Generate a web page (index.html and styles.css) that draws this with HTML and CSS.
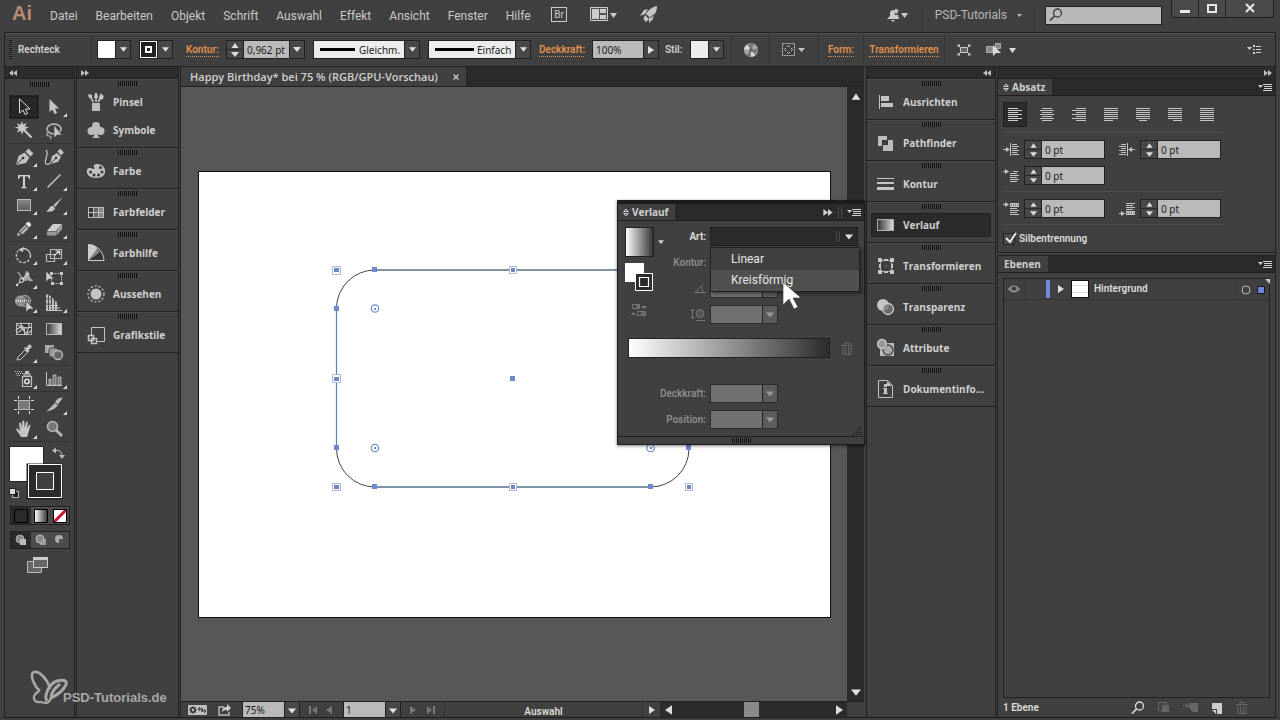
FILE: index.html
```html
<!DOCTYPE html>
<html lang="de">
<head>
<meta charset="utf-8">
<title>Happy Birthday – Illustrator</title>
<link rel="stylesheet" href="styles.css">
</head>
<body>
<svg class="defs" aria-hidden="true">
<defs>
<linearGradient id="gLight"><stop offset="0" stop-color="#fff"/><stop offset="1" stop-color="#333"/></linearGradient>
<linearGradient id="gDark"><stop offset="0" stop-color="#333"/><stop offset="1" stop-color="#ddd"/></linearGradient>
<linearGradient id="gGrey" x2="0" y2="1"><stop offset="0" stop-color="#888"/><stop offset="1" stop-color="#5c5c5c"/></linearGradient>
</defs>
<symbol id="up" viewBox="0 0 8 5"><path fill="currentColor" d="M4 0l3.500 5h-7z"/></symbol>
<symbol id="down" viewBox="0 0 8 5"><path fill="currentColor" d="M0 0h8l-4 5z"/></symbol>
<symbol id="right" viewBox="0 0 6 8"><path fill="currentColor" d="M0 0v8l6-4z"/></symbol>
<symbol id="left" viewBox="0 0 6 8"><path fill="currentColor" d="M6 0v8l-6-4z"/></symbol>
<symbol id="ff" viewBox="0 0 8 6"><path fill="currentColor" d="M0 0v6l4-3zM4 0v6l4-3z"/></symbol>
<symbol id="rw" viewBox="0 0 8 6"><path fill="currentColor" d="M4 0v6l-4-3zM8 0v6l-4-3z"/></symbol>
<symbol id="menu" viewBox="0 0 14 9"><path fill="currentColor" d="M0 2h5l-2.500 3zM5 1h9v1h-9zM6 3h8v1h-8zM6 5h8v1h-8zM5 7h9v1h-9z"/></symbol>
<symbol id="opts" viewBox="0 0 14 9"><path fill="currentColor" d="M0 2h5l-2.500 3zM6 0h2v2h-2zM6 4h2v1h-2zM6 7h2v2h-2zM9 1h5v1h-5zM9 4h5v1h-5zM9 7h5v1h-5z"/></symbol>
<symbol id="updown" viewBox="0 0 6 9"><path fill="none" stroke="currentColor" d="M.7 3.500l2.300-2.500 2.300 2.500zM.7 5.500l2.300 2.500 2.300-2.500z"/></symbol>
<symbol id="lens" viewBox="0 0 14 14"><circle cx="8.500" cy="5" r="4" fill="none" stroke="currentColor" stroke-width="1.300"/><path d="M5.500 8l-4.500 4.500" stroke="currentColor" stroke-width="1.700"/></symbol>
<symbol id="trash" viewBox="0 0 12 13"><path fill="none" stroke="currentColor" d="M0 3.500h12M4 3v-2h4v2M2 4.500v8h8v-8M4.500 5v7M7.500 5v7"/></symbol>

<symbol id="t-select" viewBox="0 0 20 20"><path d="M5.500 2v14l3.500-3 2 4.500 2.500-1-2-4.500h4.500z" fill="#252525" stroke="#ddd"/></symbol>
<symbol id="t-direct" viewBox="0 0 20 20"><path d="M5.500 2v13l3-2.500 2 4.500 2.500-1-2-4.500h4z" fill="#c6c6c6"/></symbol>
<symbol id="t-wand" viewBox="0 0 20 20"><path d="M8 0l1.200 3.800 3.400-2-1.600 3.700 4 .8-3.600 1.600 1.800 3.600-3.700-1.800-1.500 4-1.400-4-3.600 1.800 1.600-3.800-4-1.200 4-1-1.800-3.600 3.600 1.800z" fill="#c6c6c6"/><path d="M10 9l7.500 7.500" stroke="#c6c6c6" stroke-width="2.200"/></symbol>
<symbol id="t-lasso" viewBox="0 0 20 20"><ellipse cx="10" cy="8" rx="7" ry="5" fill="none" stroke="#aaa" stroke-width="1.800"/><path d="M5 11c-3 0-3 4 0 4s2 2 1 3" fill="none" stroke="#aaa" stroke-width="1.200"/><path d="M10 4v13l3-3 5 0z" fill="#c6c6c6" stroke="#404040" stroke-width=".6"/></symbol>
<symbol id="t-pen" viewBox="0 0 20 20"><path d="M2 18l2.500-9 6-3.500 5 5-3.500 5.500zM11.500 4.500l3-3 5 5-3 3z" fill="#c0c0c0"/><path d="M2.500 17.500l6-6" stroke="#404040"/><circle cx="9" cy="11" r="1.300" fill="#303030"/></symbol>
<symbol id="t-curve" viewBox="0 0 20 20"><path d="M6 17l2-8 5-3 4 4-3 5zM13.500 4.500l2.500-3 4 4-3 3z" fill="#c0c0c0"/><path d="M6.500 16.500l5-5" stroke="#404040"/><circle cx="12" cy="11" r="1.200" fill="#303030"/><path d="M2 3c4 3-3 12 0 14 1.500 1 3 0 4-1" fill="none" stroke="#c0c0c0" stroke-width="1.300"/></symbol>
<symbol id="t-type" viewBox="0 0 20 20"><path d="M4 4h12v4h-1c-.5-2-1-2.700-4-2.700v10c0 1 .5 1 2 1.200v.8h-6v-.8c1.500-.2 2-.2 2-1.200v-10c-3 0-3.500.7-4 2.700h-1z" fill="#d0d0d0"/></symbol>
<symbol id="t-line" viewBox="0 0 20 20"><path d="M3.500 16.500l13-13" stroke="#d0d0d0" stroke-width="1.300"/></symbol>
<symbol id="t-rect" viewBox="0 0 20 20"><rect x="3.500" y="4.500" width="13" height="11" fill="url(#gGrey)" stroke="#bbb"/></symbol>
<symbol id="t-brush" viewBox="0 0 20 20"><path d="M18.500 2l-9 8 1.800 2zM8.500 10.500l2.500 2.500c-1 4-5 4-9 3.500 3-1 3-5 6.500-6z" fill="#c6c6c6"/></symbol>
<symbol id="t-pencil" viewBox="0 0 20 20"><path d="M3 17l1-4 3 3zM5 12l6-6 3.500 3.500-6 6z" fill="#b0b0b0"/><path d="M11.500 5l2-2c1-1 4.500 2 3.500 3.500l-2 2z" fill="#e0e0e0"/><path d="M6.500 13.500l6-6" stroke="#555"/></symbol>
<symbol id="t-eraser" viewBox="0 0 20 20"><path d="M3 12l6-7h9l-6 7z" fill="#ccc"/><path d="M3 12.500h9v4h-9z" fill="#999"/><path d="M12.500 12.500l5.500-7v4l-5.500 7z" fill="#aaa"/></symbol>
<symbol id="t-rotate" viewBox="0 0 20 20"><path d="M6 4.500a7 7 0 0 1 10 8.500" fill="none" stroke="#c6c6c6" stroke-width="1.400"/><path d="M15 15a7 7 0 0 1-11-9" fill="none" stroke="#c6c6c6" stroke-width="1.400" stroke-dasharray="2.500 1.500"/><path d="M4 5l6-3-1 5z" fill="#c6c6c6"/></symbol>
<symbol id="t-scale" viewBox="0 0 20 20"><path d="M2.500 9.500h8v7h-8zM6.500 4.500h11v9h-11z" fill="none" stroke="#b8b8b8" stroke-width="1.200"/><path d="M10 11l5-5m-3.500 0h4v4" fill="none" stroke="#e0e0e0" stroke-width="1.200"/></symbol>
<symbol id="t-width" viewBox="0 0 20 20"><path d="M3 3c4-1 3 5 6 5s1-6 4-6c3 1 1 7 6 9-1 3-5-1-8 1-4 1-4-5-8-9z" fill="#a4a4a4"/><path d="M3 16l11-11" stroke="#ddd"/><circle cx="7.500" cy="11.500" r="2" fill="#404040" stroke="#eee"/><circle cx="3" cy="16" r="1.200" fill="#ddd"/><circle cx="14" cy="5" r="1.200" fill="#ddd"/></symbol>
<symbol id="t-free" viewBox="0 0 20 20"><rect x="7.500" y="4.500" width="10" height="10" fill="none" stroke="#bbb" stroke-dasharray="2 1"/><path d="M6 3h3v3h-3zM16 3h3v3h-3zM16 13h3v3h-3zM7 13h3v3h-3z" fill="#c6c6c6"/><path d="M2 2v11l3-3h5z" fill="#ccc" stroke="#404040" stroke-width=".6"/></symbol>
<symbol id="t-shape" viewBox="0 0 20 20"><circle cx="6.500" cy="8" r="5" fill="#888" stroke="#aaa"/><circle cx="11" cy="8" r="5.500" fill="#888" fill-opacity=".5" stroke="#aaa"/><path d="M2 8h14" stroke="#eee" stroke-width="1.500" stroke-dasharray="1 1"/><path d="M12 8v11l3-3h5z" fill="#d0d0d0" stroke="#404040" stroke-width=".6"/></symbol>
<symbol id="t-persp" viewBox="0 0 20 20"><path d="M2 1l5 2v14h-5zM8 5l2 1v11h-2zM11 8l2 1v8h-2z" fill="#bbb"/><path d="M7 12.500h7M7 15h9M2 17.500h16" stroke="#c8c8c8"/><path d="M2 6h6M2 11h6M4.500 2v15" stroke="#505050"/></symbol>
<symbol id="t-mesh" viewBox="0 0 20 20"><rect x="2.500" y="4.500" width="15" height="11" fill="#303030" stroke="#bbb"/><path d="M2 12c3-6 7-3 8 0s4 3 8-1M7 4c-2 3 7 4 3 12M14 4c4 5-3 7-1 12M3 6c5 2 8 4 15 2M3 14l6-4" fill="none" stroke="#ccc" stroke-width="1.200"/></symbol>
<symbol id="t-grad" viewBox="0 0 20 20"><rect x="2.500" y="4.500" width="15" height="11" fill="url(#gDark)" stroke="#bbb"/></symbol>
<symbol id="t-drop" viewBox="0 0 20 20"><path d="M3 17l1-3 7-7 2.500 2.500-7 7z" fill="none" stroke="#c6c6c6"/><path d="M10 5l1.500-1 1 1 2-3c1-1.500 4 .5 3 2.500l-3 2.500 1 1-1.500 1.500z" fill="#c6c6c6"/></symbol>
<symbol id="t-blend" viewBox="0 0 20 20"><rect x="1" y="2" width="9" height="8" fill="#aaa"/><rect x="5" y="5" width="9" height="9" rx="2" fill="#999" stroke="#404040"/><circle cx="14" cy="12" r="4.500" fill="#666" stroke="#bbb" stroke-width="1.300"/></symbol>
<symbol id="t-spray" viewBox="0 0 20 20"><path d="M8.500 7.500h9v10h-9zM10 5h6v2h-6z" fill="none" stroke="#c0c0c0" stroke-width="1.200"/><rect x="11" y="2" width="4" height="3" fill="#c0c0c0"/><circle cx="13" cy="12.500" r="2.200" fill="none" stroke="#ddd" stroke-width="1.600"/><path d="M1 2.500h8M2 4.500h7M3 6.500h4" stroke="#ccc" stroke-dasharray="1 1"/></symbol>
<symbol id="t-graph" viewBox="0 0 20 20"><path d="M2.500 3v13.500h15.500" fill="none" stroke="#c6c6c6"/><path d="M5 10h2v6h-2zM9 6h3v10h-3zM14 8h3v8h-3z" fill="#777" stroke="#c6c6c6" stroke-width=".8"/></symbol>
<symbol id="t-board" viewBox="0 0 20 20"><rect x="4.500" y="5.500" width="11" height="9" fill="#777" stroke="#bbb"/><path d="M0 5.500h3M17 5.500h3M0 14.500h3M17 14.500h3M4.500 1v3M15.500 1v3M4.500 16v3M15.500 16v3" stroke="#ddd"/></symbol>
<symbol id="t-slice" viewBox="0 0 20 20"><path d="M2 17l9-9 3 2.500-4 3.500zM11 7l3-3.500 5-1-5 7z" fill="#bbb"/></symbol>
<symbol id="t-hand" viewBox="0 0 20 20"><path d="M7 18c-1-3-4-5-5-8 1-1.500 2.500.5 4 2l-1-8c1-1 1.800-.5 2 0l1 5 .3-7c1-1 1.700-.5 2 0l.3 7 1.400-6c1-1 1.700-.5 1.800.3l-.8 6.200 2-3.500c1-.6 1.700 0 1.300 1-1 3-2 8-3.300 11z" fill="#c6c6c6"/></symbol>
<symbol id="t-zoom" viewBox="0 0 20 20"><circle cx="8.500" cy="7.500" r="5" fill="#777" stroke="#b5b5b5" stroke-width="1.600"/><path d="M12 11l6 6" stroke="#b5b5b5" stroke-width="2.800"/></symbol>

<symbol id="p-brush" viewBox="0 0 20 20"><path d="M6 11h8v8h-8z" fill="#bbb"/><path d="M7.500 10l-3-5M10 10v-4M12 10l3-5" stroke="#c6c6c6" stroke-width="1.500"/><path d="M2 2l4 1 0 3-3 0zM9 1l2 0 1 5h-4zM13 5l2-4 2 3 1-1-1 4-3 1z" fill="#c6c6c6"/></symbol>
<symbol id="p-club" viewBox="0 0 20 20"><circle cx="10" cy="6" r="4" fill="#bbb"/><circle cx="5.500" cy="11" r="4" fill="#bbb"/><circle cx="14.500" cy="11" r="4" fill="#bbb"/><path d="M9 9h2l1 7 2 2h-8l2-2z" fill="#bbb"/></symbol>
<symbol id="p-palette" viewBox="0 0 20 20"><path d="M1 9c-1 4 2 8 9 8 6 0 10-3 9-8-1-4-4-6-8-6-2 0-4 1-3 3 1 1 1 2-1 2-2-1-5-2-6 1z" fill="#c0c0c0"/><g fill="#3a3a3a"><circle cx="4.500" cy="11" r="1.500"/><circle cx="8" cy="14" r="1.500"/><circle cx="12.500" cy="14" r="1.500"/><circle cx="16" cy="11" r="1.500"/><circle cx="14.500" cy="6.500" r="1.500"/></g></symbol>
<symbol id="p-swatch" viewBox="0 0 20 20"><rect x="2" y="5" width="16" height="11" fill="#bbb"/><path d="M3 6h4v4h-4zM3 11h4v4h-4z" fill="#333"/><path d="M8 6h4v4h-4zM8 11h4v4h-4z" fill="#666"/><path d="M13 6h4v4h-4zM13 11h4v4h-4z" fill="#888"/></symbol>
<symbol id="p-guide" viewBox="0 0 20 20"><path d="M2.500 1.500c8 0 15 7 15.500 16h-15.500z" fill="#333" stroke="#ccc"/><path d="M2.500 1.500c4 0 7 1.500 9 4l-9 12z" fill="#ccc"/><path d="M11 5.500l3 3.500-11.500 8.500z" fill="#888"/></symbol>
<symbol id="p-look" viewBox="0 0 20 20"><circle cx="10" cy="10" r="5.500" fill="#c4c4c4"/><circle cx="10" cy="10" r="8" fill="none" stroke="#c4c4c4" stroke-width="1.200" stroke-dasharray="2.200 1.800"/></symbol>
<symbol id="p-styles" viewBox="0 0 20 20"><path d="M5.500 10v-7.500h13v14h-7" fill="none" stroke="#c4c4c4"/><path d="M2.500 10.500h5v5h-5zM5.500 13.500h5v5h-5z" fill="#404040" stroke="#c4c4c4" stroke-width="1.500"/></symbol>
<symbol id="p-align" viewBox="0 0 20 20"><path d="M3 3h1v14h-1zM5 4h8v5h-8zM5 11h12v4h-12z" fill="#c4c4c4"/></symbol>
<symbol id="p-path" viewBox="0 0 20 20"><path d="M2 3h9v4h6v11h-10v-5h-5zM7 8v4h4v-4z" fill="#bdbdbd" fill-rule="evenodd"/><path d="M6.500 13v-5.500h5v4.500" fill="none" stroke="#303030"/></symbol>
<symbol id="p-stroke" viewBox="0 0 20 20"><path d="M1 4h17v1h-17zM1 8h17v2h-17zM1 13h17v3h-17z" fill="#c4c4c4"/></symbol>
<symbol id="p-grad" viewBox="0 0 20 20"><rect x="1.500" y="4.500" width="16" height="11" fill="url(#gDark)" stroke="#aaa"/></symbol>
<symbol id="p-trans" viewBox="0 0 20 20"><rect x="4.500" y="4.500" width="11" height="11" fill="none" stroke="#aaa"/><path d="M2 2h4v4h-4zM14 2h4v4h-4zM2 14h4v4h-4zM14 14h4v4h-4zM8 3h4v2h-4zM8 15h4v2h-4zM3 8h2v4h-2zM15 8h2v4h-2zM9.500 9.500h1v1h-1z" fill="#c6c6c6"/></symbol>
<symbol id="p-transp" viewBox="0 0 20 20"><circle cx="7" cy="8" r="6" fill="#c4c4c4"/><circle cx="12" cy="12" r="5.500" fill="#777" fill-opacity=".8" stroke="#ccc" stroke-width="1.300"/></symbol>
<symbol id="p-attr" viewBox="0 0 20 20"><path d="M4 5h14v13h-14z" fill="#bbb"/><circle cx="12" cy="12" r="5" fill="#aaa" stroke="#444" stroke-width="1.300"/><circle cx="6" cy="6" r="4.500" fill="#999" stroke="#404040" stroke-width="2"/><circle cx="6" cy="6" r="4.500" fill="#999" stroke="#ccc" stroke-width="1.300"/></symbol>
<symbol id="p-doc" viewBox="0 0 20 20"><path d="M2.500 1.500h9l5 5v12h-14z" fill="none" stroke="#c4c4c4"/><path d="M11 2v5h5M8 5h3v3h-3zM7 9h4v5h1v1h-5v-1h1v-4h-1z" fill="#c4c4c4"/></symbol>

<symbol id="a-left" viewBox="0 0 16 16"><path d="M1 1.500h10M1 3.500h14M1 5.500h10M1 7.500h14M1 9.500h10M1 11.500h14M1 13.500h10" stroke="#d0d0d0"/></symbol>
<symbol id="a-center" viewBox="0 0 16 16"><path d="M3 1.500h10M1 3.500h14M3 5.500h10M1 7.500h14M3 9.500h10M1 11.500h14M3 13.500h10" stroke="#c4c4c4"/></symbol>
<symbol id="a-right" viewBox="0 0 16 16"><path d="M5 1.500h10M1 3.500h14M5 5.500h10M1 7.500h14M5 9.500h10M1 11.500h14M5 13.500h10" stroke="#c4c4c4"/></symbol>
<symbol id="a-jl" viewBox="0 0 16 16"><path d="M1 1.500h14M1 3.500h14M1 5.500h14M1 7.500h14M1 9.500h14M1 11.500h14M1 13.500h9" stroke="#c4c4c4"/></symbol>
<symbol id="a-jc" viewBox="0 0 16 16"><path d="M1 1.500h14M1 3.500h14M1 5.500h14M1 7.500h14M1 9.500h14M1 11.500h14M4 13.500h8" stroke="#c4c4c4"/></symbol>
<symbol id="a-jr" viewBox="0 0 16 16"><path d="M1 1.500h14M1 3.500h14M1 5.500h14M1 7.500h14M1 9.500h14M1 11.500h14M6 13.500h9" stroke="#c4c4c4"/></symbol>
<symbol id="a-jf" viewBox="0 0 16 16"><path d="M1 1.500h14M1 3.500h14M1 5.500h14M1 7.500h14M1 9.500h14M1 11.500h14M1 13.500h14" stroke="#c4c4c4"/></symbol>
<symbol id="i-left" viewBox="0 0 16 14"><path d="M0 6.500h5M7.500 0v13M9 1.500h5M9 3.500h7M9 5.500h5M9 7.500h7M9 9.500h5M9 11.500h7" stroke="#c4c4c4"/><path d="M3 4l4 2.500-4 2.500z" fill="#c4c4c4"/></symbol>
<symbol id="i-right" viewBox="0 0 16 14"><path d="M11 6.500h5M8.500 0v13M2 1.500h5M0 3.500h7M2 5.500h5M0 7.500h7M2 9.500h5M0 11.500h7" stroke="#c4c4c4"/><path d="M13 4l-4 2.500 4 2.500z" fill="#c4c4c4"/></symbol>
<symbol id="i-first" viewBox="0 0 16 14"><path d="M0 2.500h4M10 2.500h5M7 4.500h7M7 6.500h9M7 8.500h7M7 10.500h9M7 12.500h7" stroke="#c4c4c4"/><path d="M2 0l4 2.500-4 2.500z" fill="#c4c4c4"/></symbol>
<symbol id="i-before" viewBox="0 0 16 14"><path d="M0 2.500h4M7 6.500h7M7 8.500h9M7 10.500h7M7 12.500h9" stroke="#c4c4c4"/><path d="M2 0l4 2.500-4 2.500zM7 1h9v4h-9z" fill="#c4c4c4"/><path d="M8 3h8" stroke="#444" stroke-dasharray="1 1"/></symbol>
<symbol id="i-after" viewBox="0 0 16 14"><path d="M0 11.500h4M7 1.500h9M7 3.500h7M7 5.500h9M7 7.500h7" stroke="#c4c4c4"/><path d="M2 9l4 2.500-4 2.500zM7 9h9v4h-9z" fill="#c4c4c4"/><path d="M8 11h8" stroke="#444" stroke-dasharray="1 1"/></symbol>
</svg>

<header class="menubar">
  <span class="brand">Ai</span>
  <nav class="menus">
    <button>Datei</button><button>Bearbeiten</button><button>Objekt</button><button>Schrift</button><button>Auswahl</button><button>Effekt</button><button>Ansicht</button><button>Fenster</button><button>Hilfe</button>
  </nav>
  <div class="apptools">
    <button class="bridge">Br</button>
    <button class="arrange" aria-label="Dokumente anordnen"><svg width="27" height="15"><path fill="#505050" stroke="#ccc" d="M.5.500h17v13h-17z"/><path fill="#ccc" d="M2 2h7v10h-7zM10 2h6v4h-6zM10 8h6v4h-6zM20 6h7l-3.500 5z"/></svg></button>
    <button aria-label="GPU-Leistung"><svg width="18" height="18"><path fill="#c4c4c4" d="M17 0c-5 1-9 4-11 8l4 4c4-2 7-6 7-12zM8 3l-4 1-4 6 5-2zM14 8l-1 5-4 4 0-5zM5 9l4 4-3 3-2-2c-1-1 0-3 1-5z"/></svg></button>
  </div>
  <div class="account">
    <button class="bell" aria-label="Benachrichtigungen"><svg width="23" height="15"><path fill="#ccc" d="M0 11l3-3v-3c0-2 2-3 3-3l1 2 1 3h3l1 4zM4 12h4l-2 2zM9 0l1 2 2 .3-1.500 1.500.4 2.200-1.900-1-1.900 1 .4-2.200-1.500-1.500 2-.3zM14 5h7l-3.500 5z"/></svg></button>
    <button class="user">PSD-Tutorials <svg width="5" height="3"><use href="#down"/></svg></button>
    <label class="search"><svg width="14" height="14"><use href="#lens"/></svg><input type="search" aria-label="Suchen"></label>
  </div>
  <div class="winctl">
    <button aria-label="Minimieren"><svg width="12" height="11"><path fill="#e8e8e8" d="M1 7h10v3h-10z"/></svg></button>
    <button aria-label="Maximieren"><svg width="12" height="11"><path fill="none" stroke="#e8e8e8" stroke-width="2" d="M2 2h8v7h-8z"/></svg></button>
    <button class="close" aria-label="Schließen"><svg width="12" height="11"><path stroke="#e8e8e8" stroke-width="2" d="M2 1l8 8M10 1l-8 8"/></svg></button>
  </div>
</header>

<section class="control">
  <i class="vgrip"></i>
  <span class="objtype">Rechteck</span>
  <div class="combo"><button class="sw white" aria-label="Fläche"></button><button class="drop" aria-label="Fläche wählen"><svg width="7" height="5"><use href="#down"/></svg></button></div>
  <div class="combo gap8"><button class="sw ring" aria-label="Konturfarbe"><svg width="17" height="17"><path fill="none" stroke="#fff" d="M.5.500h16v16h-16z"/><path fill="none" stroke="#fff" stroke-width="2" d="M6 6h5v5h-5z"/></svg></button><button class="drop" aria-label="Kontur wählen"><svg width="7" height="5"><use href="#down"/></svg></button></div>
  <a class="lnk w-kontur" href="#">Kontur:</a>
  <div class="combo"><span class="step"><button aria-label="Mehr"><svg width="8" height="5"><use href="#up"/></svg></button><button aria-label="Weniger"><svg width="8" height="5"><use href="#down"/></svg></button></span><input class="w45f" value="0,962 pt" aria-label="Konturstärke"><button class="drop" aria-label="Stärke wählen"><svg width="8" height="5"><use href="#down"/></svg></button></div>
  <div class="combo line gap8"><svg class="stroke" width="35" height="3"><path d="M0 0h35v3h-35z"/></svg><select class="profile" aria-label="Breitenprofil"><option>Gleichm.</option></select><span class="drop"><svg width="7" height="5"><use href="#down"/></svg></span></div>
  <div class="combo line gap8"><svg class="stroke" width="39" height="3"><path d="M0 0h39v3h-39z"/></svg><select class="brushdef" aria-label="Pinseldefinition"><option>Einfach</option></select><span class="drop"><svg width="7" height="5"><use href="#down"/></svg></span></div>
  <a class="lnk w-deck" href="#">Deckkraft:</a>
  <div class="combo"><input class="w50f" value="100%" aria-label="Deckkraft"><button class="drop" aria-label="Deckkraft wählen"><svg width="6" height="8"><use href="#right"/></svg></button></div>
  <span class="stil">Stil:</span>
  <div class="combo"><button class="sw light" aria-label="Stil"></button><button class="drop" aria-label="Stil wählen"><svg width="7" height="5"><use href="#down"/></svg></button></div>
  <button class="cell w38" aria-label="Bildmaterial neu färben"><svg width="16" height="16"><circle cx="8" cy="8" r="7" fill="#a8a8a8"/><path d="M8 8l-3-6.300a7 7 0 0 1 6 0zM8 8l6.800-1.500a7 7 0 0 1-3 5.500zM8 8l0 7a7 7 0 0 1-5-2z" fill="#777"/><path d="M8 8l-7-1a7 7 0 0 1 2.500-4zM8 8l4 5.500a7 7 0 0 1-4 1.500z" fill="#ddd"/><circle cx="8" cy="8" r="2" fill="#666"/></svg></button>
  <button class="cell w49" aria-label="Ausrichten"><svg width="24" height="14"><path fill="none" stroke="#c4c4c4" stroke-dasharray="2 1" d="M.5.500h12v12h-12z"/><path fill="none" stroke="#c4c4c4" d="M5 4l1.500-1.500 1.500 1.500M5 9l1.500 1.500 1.500-1.500M4 5l-1.500 1.500 1.500 1.500M9 5l1.500 1.500-1.500 1.500"/><path fill="#c4c4c4" d="M16 5h7l-3.500 4z"/></svg></button>
  <span class="cell w45"><a class="lnk" href="#">Form:</a></span>
  <span class="cell w81"><a class="lnk" href="#">Transformieren</a></span>
  <button class="cell w38" aria-label="Isolieren"><svg width="16" height="14"><path fill="#666" stroke="#ccc" d="M4.500 4.500h7v5h-7z"/><path stroke="#ccc" d="M1 1l3 2.500M15 1l-3 2.500M1 13l3-2.500M15 13l-3-2.500" fill="none"/><path fill="#ccc" d="M4 1v3h-3zM12 1v3h3zM4 13v-3h-3zM12 13v-3h3z"/></svg></button>
  <button class="plain" aria-label="Ähnliche auswählen"><svg width="32" height="14"><path fill="#888" stroke="#aaa" d="M1.500 3.500h6v6h-6zM10.500.500h5v5h-5z"/><path fill="#ddd" d="M8 2v11l3-3h5zM24 5h7l-3.500 5z"/></svg></button>
  <button class="plain end" aria-label="Menü"><svg width="14" height="9"><use href="#opts"/></svg></button>
</section>

<main class="work">
  <aside class="tools">
    <div class="strip"><svg width="8" height="6"><use href="#rw"/></svg></div>
    <i class="grip"></i>
    <div class="tg"><button class="on" aria-label="Auswahl"><svg><use href="#t-select"/></svg></button><button class="m" aria-label="Direktauswahl"><svg><use href="#t-direct"/></svg></button><button aria-label="Zauberstab"><svg><use href="#t-wand"/></svg></button><button aria-label="Lasso"><svg><use href="#t-lasso"/></svg></button></div>
    <div class="tg"><button class="m" aria-label="Zeichenstift"><svg><use href="#t-pen"/></svg></button><button aria-label="Kurvenzeichner"><svg><use href="#t-curve"/></svg></button><button class="m" aria-label="Text"><svg><use href="#t-type"/></svg></button><button class="m" aria-label="Linie"><svg><use href="#t-line"/></svg></button><button class="m" aria-label="Rechteck"><svg><use href="#t-rect"/></svg></button><button class="m" aria-label="Pinsel"><svg><use href="#t-brush"/></svg></button><button class="m" aria-label="Buntstift"><svg><use href="#t-pencil"/></svg></button><button class="m" aria-label="Radiergummi"><svg><use href="#t-eraser"/></svg></button></div>
    <div class="tg"><button class="m" aria-label="Drehen"><svg><use href="#t-rotate"/></svg></button><button class="m" aria-label="Skalieren"><svg><use href="#t-scale"/></svg></button><button class="m" aria-label="Breite"><svg><use href="#t-width"/></svg></button><button aria-label="Frei transformieren"><svg><use href="#t-free"/></svg></button><button class="m" aria-label="Formerstellung"><svg><use href="#t-shape"/></svg></button><button class="m" aria-label="Perspektive"><svg><use href="#t-persp"/></svg></button></div>
    <div class="tg"><button aria-label="Gitter"><svg><use href="#t-mesh"/></svg></button><button aria-label="Verlauf"><svg><use href="#t-grad"/></svg></button><button class="m" aria-label="Pipette"><svg><use href="#t-drop"/></svg></button><button aria-label="Angleichen"><svg><use href="#t-blend"/></svg></button></div>
    <div class="tg"><button class="m" aria-label="Symbol aufsprühen"><svg><use href="#t-spray"/></svg></button><button class="m" aria-label="Diagramm"><svg><use href="#t-graph"/></svg></button></div>
    <div class="tg"><button aria-label="Zeichenfläche"><svg><use href="#t-board"/></svg></button><button class="m" aria-label="Slice"><svg><use href="#t-slice"/></svg></button><button class="m" aria-label="Hand"><svg><use href="#t-hand"/></svg></button><button aria-label="Zoom"><svg><use href="#t-zoom"/></svg></button></div>
    <svg class="fillstroke" width="58" height="56"><path fill="#fff" stroke="#222" d="M.5.500h34v35h-34z"/><path fill="#2b2b2b" stroke="#222" stroke-width="3" d="M19 19h33v33h-33z"/><path fill="#2b2b2b" stroke="#fff" d="M19.500 18.500h33v33h-33z"/><path fill="#404040" stroke="#fff" d="M27.500 26.500h17v17h-17z"/><path fill="none" stroke="#bbb" d="M46 4.500h3q4 0 4 6"/><path fill="#bbb" d="M43 4.500l4-3v6zM50 9h6l-3 4z"/><path fill="#222" stroke="#bbb" d="M3.500 45.500h6v6h-6z"/><path fill="#ddd" stroke="#222" d="M.5 42.500h6v6h-6z"/></svg>
    <div class="seg"><button class="dark" aria-label="Farbe"><svg width="14" height="14"><path fill="#2a2a2a" stroke="#000" d="M.5.500h13v13h-13z"/></svg></button><button aria-label="Verlauf"><svg width="14" height="14"><path fill="url(#gLight)" stroke="#000" d="M.5.500h13v13h-13z"/></svg></button><button aria-label="Ohne"><svg width="14" height="14"><path fill="#fff" d="M1 1h12v12h-12z"/><path stroke="#c4182c" stroke-width="3" d="M1 13l12-12"/><path fill="none" stroke="#000" d="M.5.500h13v13h-13z"/></svg></button></div>
    <div class="seg modes"><button class="dark" aria-label="Normal zeichnen"><svg width="12" height="12"><circle cx="5" cy="5" r="4" fill="#888" stroke="#aaa"/><path fill="#bbb" d="M5 5h6v6h-6z"/></svg></button><button aria-label="Dahinter zeichnen"><svg width="12" height="12"><path fill="#999" d="M5 5h6v6h-6z"/><circle cx="5" cy="5" r="4" fill="#888" stroke="#bbb"/></svg></button><button aria-label="Innen zeichnen"><svg width="12" height="12"><circle cx="5" cy="5" r="4" fill="#aaa"/><path fill="#555" d="M5 5h4v4h-4z"/></svg></button></div>
    <button class="screen" aria-label="Bildschirmmodus"><svg width="22" height="17"><path fill="#666" stroke="#bbb" d="M.5 4.500h14v11h-14z"/><path fill="#666" stroke="#ccc" d="M6.500.500h14v10h-14z"/><path fill="#ccc" d="M6 0h15v3h-15z"/></svg></button>
  </aside>

  <aside class="dock leftdock">
    <div class="strip"><svg width="8" height="6"><use href="#ff"/></svg></div>
    <div class="dg"><i class="grip"></i><button><svg><use href="#p-brush"/></svg>Pinsel</button><button><svg><use href="#p-club"/></svg>Symbole</button></div>
    <div class="dg"><i class="grip"></i><button><svg><use href="#p-palette"/></svg>Farbe</button></div>
    <div class="dg"><i class="grip"></i><button><svg><use href="#p-swatch"/></svg>Farbfelder</button></div>
    <div class="dg"><i class="grip"></i><button><svg><use href="#p-guide"/></svg>Farbhilfe</button></div>
    <div class="dg"><i class="grip"></i><button><svg><use href="#p-look"/></svg>Aussehen</button></div>
    <div class="dg"><i class="grip"></i><button><svg><use href="#p-styles"/></svg>Grafikstile</button></div>
  </aside>

  <section class="document">
    <div class="tabs"><div class="tab">Happy Birthday* bei 75 % (RGB/GPU-Vorschau)<button aria-label="Schließen"><svg width="6" height="6"><path stroke="#ccc" stroke-width="1.300" d="M.5.500l5 5M5.500.500l-5 5"/></svg></button></div></div>
    <div class="viewport">
      <div class="paste">
        <div class="artboard">
          <svg width="100%" height="100%" viewBox="199 172 631 445">
            <rect x="336.500" y="270" width="352.500" height="217" rx="38.500" fill="none" stroke="#444"/>
            <path d="M375 270h275M375 487h275M336.500 308v140M689 308v140" stroke="#5f86ae" stroke-width="1.200"/>
            <g fill="#fff" stroke="#aab6e2"><path d="M332.500 266.500h8v8h-8zM509.500 266.500h7v7h-7zM332.500 374.500h8v8h-8zM332.500 483.500h8v7h-8zM509.500 483.500h7v7h-7zM685.500 483.500h7v7h-7z"/></g>
            <path fill="#7088c0" d="M334 268h5v4h-5zM511 268h4v4h-4zM334 377h5v4h-5zM334 485h5v4h-5zM511 485h4v4h-4zM687 485h4v4h-4z"/>
            <path fill="#7088d0" d="M372 267h5v5h-5zM334 306h5v5h-5zM334 445h5v5h-5zM372 484h5v5h-5zM648 484h5v5h-5zM686 445h5v5h-5zM510 376h5v5h-5z"/>
            <g fill="none" stroke="#6f8cd0" stroke-width="1.200"><circle cx="375" cy="308.500" r="3.700"/><circle cx="375" cy="448" r="3.700"/><circle cx="650.500" cy="448" r="3.700"/></g>
            <path fill="#6f8cd0" d="M374 308h2v2h-2zM374 447h2v2h-2zM650 447h2v2h-2z"/>
          </svg>
        </div>
      </div>
      <div class="vscroll"><button aria-label="Nach oben"><svg width="10" height="7"><use href="#up"/></svg></button><button aria-label="Nach unten"><svg width="10" height="7"><use href="#down"/></svg></button></div>
    </div>
    <footer class="status">
      <button class="st1" aria-label="Synchronisieren"><svg width="20" height="12"><rect width="19" height="10" y="1" rx="1" fill="#c0c0c0"/><circle cx="5" cy="6" r="2.200" fill="none" stroke="#333" stroke-width="1.600"/><path d="M5 2v8M1 6h8M2.200 3.200l5.600 5.600M7.800 3.200l-5.600 5.600" stroke="#333" stroke-width=".8"/><circle cx="5" cy="6" r="1.200" fill="#c0c0c0"/><path d="M10 5h4v3M10 5l2-2M10 5l2 2M18 7h-4v-3M18 7l-2-2M18 7l-2 2" fill="none" stroke="#333"/></svg></button>
      <button class="st2" aria-label="Teilen"><svg width="14" height="12"><path fill="none" stroke="#bbb" stroke-width="1.400" d="M6 3h-5v8h10v-3"/><path fill="#ccc" d="M4 8c0-4 2-5 5-5v-3l4 4-4 4v-2c-2 0-3 0-5 2z"/></svg></button>
      <div class="combo st3"><input value="75%" aria-label="Zoomstufe"><button class="drop" aria-label="Zoom wählen"><svg width="8" height="6"><use href="#down"/></svg></button></div>
      <button class="nav" aria-label="Erste"><svg width="9" height="8"><path fill="#777" d="M0 0h2v8h-2zM8 0v8l-5-4z"/></svg></button>
      <button class="nav" aria-label="Vorherige"><svg width="6" height="8"><use href="#left"/></svg></button>
      <div class="combo"><input value="1" aria-label="Zeichenfläche"><button class="drop" aria-label="Zeichenfläche wählen"><svg width="8" height="6"><use href="#down"/></svg></button></div>
      <button class="nav" aria-label="Nächste"><svg width="6" height="8"><use href="#right"/></svg></button>
      <button class="nav" aria-label="Letzte"><svg width="9" height="8"><path fill="#777" d="M0 0v8l5-4zM6 0h2v8h-2z"/></svg></button>
      <span class="mode">Auswahl</span>
      <button class="more" aria-label="Statusanzeige"><svg width="6" height="8"><use href="#right"/></svg></button>
      <div class="hscroll"><button aria-label="Nach links"><svg width="7" height="10"><use href="#left"/></svg></button><i class="thumb"></i><button aria-label="Nach rechts"><svg width="7" height="10"><use href="#right"/></svg></button></div>
    </footer>

    <section class="gradient">
      <div class="ptabs"><h2><svg width="6" height="9"><use href="#updown"/></svg>Verlauf</h2><span class="pmenu"><svg width="10" height="7"><use href="#ff"/></svg><i class="bars"></i><svg width="14" height="9"><use href="#menu"/></svg></span></div>
      <div class="gbody">
        <div class="gleft">
          <div class="gprev"><button aria-label="Verlauf"></button><svg width="6" height="4"><use href="#down"/></svg></div>
          <svg width="30" height="30"><path fill="#fff" d="M0 0h19v19h-19z"/><path fill="#2b2b2b" stroke="#fff" d="M10.500 10.500h17v17h-17z"/><path fill="none" stroke="#fff" stroke-width="1.200" d="M14.500 14.500h9v9h-9z"/></svg>
          <svg class="rev" width="18" height="16"><path fill="none" stroke="#777" d="M1.500 1.500h7v4h-7zM6.500 8.500h8v4h-8z"/><path fill="#777" d="M10 3h6l-3 3zM0 12h5l-2.500-3z"/><path fill="#666" d="M5 2h3v3h-3zM10 9h4v3h-4z"/></svg>
        </div>
        <div class="gform">
          <span class="lb on">Art:</span><button class="artsel" aria-haspopup="listbox" aria-label="Art"><i class="bars"></i><svg width="8" height="6"><use href="#down"/></svg></button>
          <span class="lb">Kontur:</span><span></span>
          <svg class="lbi" width="12" height="10"><path fill="none" stroke="#777" d="M12 8.500h-11l8-8M7 3q2 2 2 5"/></svg><div class="combo off"><input disabled aria-label="Winkel"><span class="drop"><svg width="8" height="6"><use href="#down"/></svg></span></div>
          <svg class="lbi" width="16" height="14"><circle cx="10" cy="5.500" r="4" fill="#555" stroke="#777"/><path fill="none" stroke="#777" d="M2.500 1v10M1 3l1.500-2 1.500 2M1 9l1.500 2 1.500-2M6 12.500h9"/></svg><div class="combo off"><input disabled aria-label="Seitenverhältnis"><span class="drop"><svg width="8" height="6"><use href="#down"/></svg></span></div>
        </div>
      </div>
      <div class="grow"><div class="gbar"></div><svg width="12" height="13"><use href="#trash"/></svg></div>
      <div class="gform low">
        <label class="lb" for="gd">Deckkraft:</label><div class="combo off"><input id="gd" disabled><span class="drop"><svg width="8" height="6"><use href="#down"/></svg></span></div>
        <label class="lb" for="gp">Position:</label><div class="combo off"><input id="gp" disabled><span class="drop"><svg width="8" height="6"><use href="#down"/></svg></span></div>
      </div>
      <div class="gfoot"><i class="grip"></i></div>
      <svg class="corner" width="10" height="10"><path stroke="#181818" stroke-dasharray="1 1" d="M8 1.500h2M6 3.500h4M4 5.500h6M2 7.500h8M0 9.500h10"/></svg>
      <ul class="popup" role="listbox" aria-label="Art"><li role="option">Linear</li><li role="option" class="hot">Kreisförmig</li></ul>
      <svg class="cursor" width="20" height="32"><path fill="#fff" stroke="#333" stroke-width=".6" d="M1 1v23l6-6 5 10 4-2-5-9h8z"/></svg>
    </section>
  </section>

  <aside class="dock rightdock">
    <div class="strip"><svg width="8" height="6"><use href="#rw"/></svg></div>
    <div class="dg"><i class="grip"></i><button><svg><use href="#p-align"/></svg>Ausrichten</button></div>
    <div class="dg"><i class="grip"></i><button><svg><use href="#p-path"/></svg>Pathfinder</button></div>
    <div class="dg"><i class="grip"></i><button><svg><use href="#p-stroke"/></svg>Kontur</button></div>
    <div class="dg"><i class="grip"></i><button class="on"><svg><use href="#p-grad"/></svg>Verlauf</button></div>
    <div class="dg"><i class="grip"></i><button><svg><use href="#p-trans"/></svg>Transformieren</button></div>
    <div class="dg"><i class="grip"></i><button><svg><use href="#p-transp"/></svg>Transparenz</button></div>
    <div class="dg"><i class="grip"></i><button><svg><use href="#p-attr"/></svg>Attribute</button></div>
    <div class="dg"><i class="grip"></i><button><svg><use href="#p-doc"/></svg>Dokumentinfo...</button></div>
  </aside>

  <aside class="panels">
    <div class="strip"><svg width="8" height="6"><use href="#ff"/></svg></div>
    <section class="absatz">
      <div class="ptabs"><h2><svg width="6" height="9"><use href="#updown"/></svg>Absatz</h2><span class="pmenu"><svg width="14" height="9"><use href="#menu"/></svg></span></div>
      <div class="abody">
        <div class="aligns"><button class="on" aria-label="Linksbündig"><svg><use href="#a-left"/></svg></button><button aria-label="Zentriert"><svg><use href="#a-center"/></svg></button><button aria-label="Rechtsbündig"><svg><use href="#a-right"/></svg></button><button aria-label="Blocksatz links"><svg><use href="#a-jl"/></svg></button><button aria-label="Blocksatz mitte"><svg><use href="#a-jc"/></svg></button><button aria-label="Blocksatz rechts"><svg><use href="#a-jr"/></svg></button><button aria-label="Blocksatz"><svg><use href="#a-jf"/></svg></button></div>
        <div class="fields">
          <div class="fld"><svg><use href="#i-left"/></svg><div class="combo"><span class="step"><button aria-label="Mehr"><svg width="7" height="5"><use href="#up"/></svg></button><button aria-label="Weniger"><svg width="7" height="5"><use href="#down"/></svg></button></span><input value="0 pt" aria-label="Einzug links"></div></div>
          <div class="fld"><svg><use href="#i-right"/></svg><div class="combo"><span class="step"><button aria-label="Mehr"><svg width="7" height="5"><use href="#up"/></svg></button><button aria-label="Weniger"><svg width="7" height="5"><use href="#down"/></svg></button></span><input value="0 pt" aria-label="Einzug rechts"></div></div>
          <div class="fld"><svg><use href="#i-first"/></svg><div class="combo"><span class="step"><button aria-label="Mehr"><svg width="7" height="5"><use href="#up"/></svg></button><button aria-label="Weniger"><svg width="7" height="5"><use href="#down"/></svg></button></span><input value="0 pt" aria-label="Einzug erste Zeile"></div></div>
        </div>
        <div class="fields">
          <div class="fld"><svg><use href="#i-before"/></svg><div class="combo"><span class="step"><button aria-label="Mehr"><svg width="7" height="5"><use href="#up"/></svg></button><button aria-label="Weniger"><svg width="7" height="5"><use href="#down"/></svg></button></span><input value="0 pt" aria-label="Abstand davor"></div></div>
          <div class="fld"><svg><use href="#i-after"/></svg><div class="combo"><span class="step"><button aria-label="Mehr"><svg width="7" height="5"><use href="#up"/></svg></button><button aria-label="Weniger"><svg width="7" height="5"><use href="#down"/></svg></button></span><input value="0 pt" aria-label="Abstand danach"></div></div>
        </div>
        <label class="check"><span class="box"><input type="checkbox" checked><svg width="14" height="13"><path d="M2 6l4 4 6-9" fill="none" stroke="#eee" stroke-width="1.800"/></svg></span>Silbentrennung</label>
      </div>
    </section>
    <section class="ebenen">
      <div class="ptabs"><h2>Ebenen</h2><span class="pmenu"><svg width="14" height="9"><use href="#menu"/></svg></span></div>
      <div class="layers">
        <div class="layer">
          <button class="eye" aria-label="Sichtbar"><svg width="12" height="8"><path fill="#777" stroke="#aaa" d="M.5 4q5.500-6 11 0-5.500 6-11 0z"/><circle cx="6" cy="3.500" r="2" fill="#333"/></svg></button>
          <i class="lock"></i><i class="bar"></i>
          <button class="exp" aria-label="Aufklappen"><svg width="6" height="8"><use href="#right"/></svg></button>
          <i class="thumbn"></i><span class="lname">Hintergrund</span>
          <svg class="target" width="33" height="20"><circle cx="9" cy="11" r="4" fill="none" stroke="#bbb"/><path fill="#6f86e0" stroke="#151515" d="M20.500 7.500h7v7h-7z"/><path fill="#ccc" d="M28 0h5v5z"/></svg>
        </div>
      </div>
      <footer class="lfoot"><span>1 Ebene</span>
        <button aria-label="Suchen"><svg width="14" height="14"><use href="#lens"/></svg></button>
        <button class="dim" aria-label="Schnittmaske"><svg width="12" height="11"><path fill="none" stroke="#666" d="M.5.500h8v8h-8z"/><path fill="#666" d="M4 3h7v7h-7z"/></svg></button>
        <button class="dim" aria-label="Unterebene"><svg width="15" height="11"><path fill="#666" d="M6 1h9v9h-5l-4-4zM0 3h3v-2l3 3-3 2v-2h-3z"/></svg></button>
        <button aria-label="Neue Ebene"><svg width="12" height="12"><path fill="#ccc" d="M1 1h10v11h-5v-5h-5zM1 8h4v4z"/></svg></button>
        <button class="dim" aria-label="Löschen"><svg width="12" height="13"><use href="#trash"/></svg></button>
      </footer>
    </section>
  </aside>
</main>

<div class="watermark"><svg width="38" height="36"><g fill="none" stroke="#a8a8a8"><path stroke-width="2.600" d="M20 19c-2-9-10-18-16-17-5 2 0 14 6 19"/><path stroke-width="2.200" d="M9 21c-8 5-6 12 2 11 6 2 8 1 10-4"/><path stroke-width="3" d="M17 31c-3-4 1-17 10-20 8-2 12 0 7 7-3 4-7 7-13 10 0-5 4-10 9-14"/></g></svg><span>PSD-Tutorials.de</span></div>
</body>
</html>
```

FILE: styles.css
```css
* { box-sizing: border-box; }
body {
  margin: 0;
  min-height: 100vh;
  display: flex;
  flex-direction: column;
  background: #404040;
  color: #d0d0d0;
  font: 11px/14px "Open Sans", "Noto Sans", sans-serif;
}
svg { display: block; flex: none; overflow: visible; }
.defs { position: absolute; width: 0; height: 0; }
button {
  display: flex; align-items: center; justify-content: center;
  margin: 0; padding: 0; border: 0; background: none;
  color: inherit; font: inherit; flex: none;
}
input, select {
  margin: 0; border: 0; border-radius: 0; padding: 0 0 0 3px;
  background: #bababa; color: #1c1c1c; font: 10px/14px "Noto Sans", sans-serif;
  min-width: 0; outline: 0;
}
select { appearance: none; background: #ececec; }
h2 { margin: 0; font-size: 10px; font-weight: 700; }

/* menu bar */
.menubar { display: flex; height: 32px; flex: none; font: 12px/14px Roboto, sans-serif; color: #cacaca; }
.brand { width: 50px; padding-left: 12px; font: bold 20px/26px "Liberation Sans", sans-serif; color: #b98a76; flex: none; }
.menus { display: flex; gap: 18px; align-items: center; flex: none; width: 485px; }
.apptools { display: flex; align-items: center; gap: 23px; padding: 0 0 3px 16px; }
.bridge { width: 16px; height: 15px; border: 1px solid #ccc; font-size: 10px; }
.account { display: flex; align-items: center; margin-left: auto; padding-bottom: 2px; }
.bell { width: 36px; height: 24px; justify-content: flex-start; border-right: 1px solid #333; }
.user { gap: 10px; width: 112px; height: 24px; border-right: 1px solid #333; color: #b8b8b8; }
.search { display: flex; align-items: center; width: 117px; height: 19px; margin-left: 10px; padding-left: 3px; background: #b9b9b9; border: 1px solid #222; color: #3c3c3c; }
.search input { flex: 1; background: none; }
.winctl { display: flex; height: 18px; margin: 0 6px 0 9px; border: 1px solid #222; border-top: 0; border-radius: 0 0 3px 3px; background: #4a4a4a; }
.winctl button { width: 27px; border-right: 1px solid #222; }
.winctl .close { width: 47px; border: 0; }

/* control bar */
.control { display: flex; align-items: center; height: 35px; flex: none; margin: 0 4px; padding-left: 4px; border: 1px solid #222; box-shadow: inset 0 1px #505050; font: 600 10px/14px Roboto, sans-serif; }
.vgrip { width: 3px; height: 19px; background: repeating-linear-gradient(#111 0 1px, #555 1px 2px); }
.objtype { width: 80px; height: 28px; margin-right: 5px; padding: 7px 0 0 6px; border-right: 1px solid #333; }
.combo { display: flex; height: 19px; border: 1px solid #222; flex: none; }
.combo input { height: 17px; }
.gap8 { margin-left: 8px; }
.drop { display: flex; align-items: center; justify-content: center; width: 15px; background: #484848; border-left: 1px solid #222; color: #e0e0e0; }
.sw { width: 17px; }
.sw.white { background: #fff; }
.sw.light { background: #ececec; }
.sw.ring { background: #222; }
.lnk { color: #e0914e; text-decoration: none; border-bottom: 1px dotted #e0914e; line-height: 13px; white-space: nowrap; flex: none; }
.w-kontur { width: 33px; margin: 0 7px 0 13px; }
.w-deck { width: 45px; margin: 0 8px; }
.step { display: flex; flex-direction: column; width: 17px; border-right: 1px solid #222; background: #484848; color: #ddd; }
.step button { flex: 1; border-bottom: 1px solid #2a2a2a; }
.step button + button { border: 0; }
.w45f { width: 45px; }
.w50f { width: 50px; }
.line { position: relative; }
.stroke { position: absolute; left: 6px; top: 7px; pointer-events: none; }
.line .profile { width: 90px; padding-left: 45px; }
.line .brushdef { width: 86px; padding-left: 48px; }
.stil { width: 17px; margin: 0 8px 0 6px; }
.cell { display: flex; align-items: center; justify-content: center; height: 28px; border-left: 1px solid #333; flex: none; }
.w38 { width: 38px; }
.w49 { width: 49px; }
.w45 { width: 45px; }
.w81 { width: 81px; }
.combo + .cell { margin-left: 7px; }
.plain { margin-left: 3px; }
.end { margin: 0 14px 0 auto; }

/* work area */
.work { flex: 1; display: flex; margin: 0 4px 2px; border-bottom: 1px solid #1f1f1f; }
.strip { display: flex; align-items: center; height: 12px; flex: none; padding-left: 4px; background: #2c2c2c; color: #c0c0c0; border-bottom: 1px solid #222; }
.grip { display: block; width: 19px; height: 5px; margin: 0 auto; background: repeating-linear-gradient(90deg, #111 0 1px, #484848 1px 2px); }
.tools { width: 71px; border: solid #222; border-width: 0 1px; flex: none; }
.tools > .grip { margin: 3px auto 7px; }
.tg { display: grid; grid-template-columns: 30px 30px; margin: 0 4px; padding-top: 1px; border-bottom: 1px solid #333; }
.tg button { position: relative; height: 24px; }
.tg svg { width: 20px; height: 20px; }
.tg .on { background: #272727; outline: 1px solid #1c1c1c; outline-offset: -2px; }
.tg .m::after { content: ""; position: absolute; right: 2px; bottom: 2px; border: solid transparent; border-width: 0 0 4px 4px; border-bottom-color: #ddd; }
.fillstroke { margin: 4px 0 0 4px; }
.seg { display: grid; grid-template-columns: 20px 19px 19px; height: 19px; width: 60px; margin: 4px 0 0 5px; border: 1px solid #222; background: #4c4c4c; }
.seg .dark { background: #2a2a2a; }
.modes { height: 18px; margin-top: 6px; }
.screen { margin: 8px 0 0 22px; }

.dock { flex: none; border: solid #222; border-width: 0 1px; }
.leftdock { width: 103px; margin-left: 1px; }
.rightdock { width: 130px; }
.dg { display: flex; flex-direction: column; padding: 2px 0 3px; border-bottom: 1px solid #222; box-shadow: inset 0 1px #4a4a4a; }
.dg .grip { margin-bottom: 2px; }
.dg button { width: 100%; height: 28px; justify-content: flex-start; padding-left: 9px; gap: 7px; font-size: 10px; font-weight: 700; white-space: nowrap; }
.dg svg { width: 20px; height: 20px; }
.rightdock .dg button { width: auto; margin: 0 4px; padding-left: 5px; padding-right: 4px; }
.rightdock .dg .on { height: 24px; margin: 2px 4px; background: #2b2b2b; box-shadow: inset 0 0 0 1px #222; border-radius: 2px; }
.rightdock .strip { justify-content: flex-end; padding-right: 4px; }

/* document */
.document { position: relative; flex: 1; min-width: 0; display: flex; flex-direction: column; margin: 0 2px 0 1px; border-left: 1px solid #222; }
.tabs { height: 20px; flex: none; background: #2a2a2a; border-bottom: 1px solid #222; display: flex; }
.tab { display: flex; align-items: center; gap: 15px; padding: 0 7px 0 9px; background: #404040; font-weight: 600; white-space: nowrap; }
.viewport { flex: 1; display: flex; }
.paste { flex: 1; display: flex; padding: 84px 16px 83px 17px; background: #575757; }
.artboard { flex: 1; min-width: 0; background: #fff; border: 1px solid #111; display: flex; }
.artboard svg { flex: 1 1 0; min-width: 0; height: auto; }
.vscroll { width: 17px; display: flex; flex-direction: column; justify-content: space-between; padding: 6px 0 5px; background: #2b2b2b; color: #e0e0e0; }
.status { display: flex; align-items: stretch; height: 16px; flex: none; border-top: 1px solid #222; color: #ddd; }
.status .combo { height: 15px; border-width: 0 1px; }
.status .combo input { height: 15px; width: 41px; padding-left: 2px; }
.status .combo .drop svg { margin-top: 2px; }
.st1 { margin-left: 7px; }
.st2 { margin-left: 10px; }
.st3 { margin: 0 9px 0 10px; }
.nav { width: 17px; justify-content: flex-start; color: #777; }
.st3 + .nav + .nav + .combo { margin-right: 9px; }
.mode { flex: 1; padding-top: 3px; text-align: center; font: 600 10px/14px Roboto, sans-serif; border-left: 1px solid #333; }
.more { width: 18px; border-left: 1px solid #333; }
.hscroll { display: flex; width: 187px; margin-right: 17px; padding: 0 4px 0 5px; background: #2b2b2b; }
.thumb { width: 15px; background: #8a8a8a; margin: 0 auto 0 72px; }

/* gradient panel */
.gradient { position: absolute; right: -1px; top: 133px; width: 248px; height: 245px; border: 1px solid #1c1c1c; border-top-width: 4px; background: #404040; box-shadow: 0 1px 3px rgba(0, 0, 0, .5); display: flex; flex-direction: column; z-index: 2; }
.ptabs { display: flex; height: 17px; flex: none; background: #2a2a2a; border-bottom: 1px solid #1f1f1f; }
.ptabs h2 { display: flex; align-items: center; gap: 3px; padding: 0 7px 0 5px; background: #404040; line-height: 16px; }
.pmenu { display: flex; align-items: center; gap: 5px; margin-left: auto; padding-right: 3px; }
.bars { width: 4px; height: 11px; border: solid #4a4a4a; border-width: 0 1px; }
.gbody { display: flex; padding: 6px 6px 0 7px; }
.gleft { width: 45px; display: flex; flex-direction: column; gap: 6px; }
.gprev { display: flex; align-items: center; gap: 4px; }
.gprev button { width: 29px; height: 30px; border: 1px solid #222; background: linear-gradient(90deg, #fff, #333); }
.rev { margin: 4px 0 0 6px; }
.gform { display: grid; grid-template-columns: 36px 1fr; column-gap: 4px; row-gap: 7px; align-items: center; grid-auto-rows: 19px; flex: 1; }
.lb { text-align: right; color: #8c8c8c; font: 600 10px/14px Roboto, sans-serif; white-space: nowrap; }
.lb.on { color: #e0e0e0; }
.lbi { justify-self: end; }
.artsel { height: 19px; justify-content: flex-end; gap: 5px; padding-right: 4px; background: #2b2b2b; border: 1px solid #222; color: #e0e0e0; }
.off { justify-self: start; border-color: #2c2c2c; }
.off input { width: 51px; background: #707070; }
.off .drop { background: #5c5c5c; color: #999; }
.grow { display: flex; align-items: center; gap: 11px; padding: 14px 10px 0; color: #666; }
.gbar { width: 202px; height: 20px; border: 1px solid #222; background: linear-gradient(90deg, #fff, #2b2b2b); }
.low { flex: none; grid-template-columns: 88px 1fr; margin-top: 26px; }
.gfoot { height: 8px; margin-top: auto; border-top: 1px solid #222; padding-top: 1px; }
.corner { position: absolute; right: 2px; bottom: 9px; }
.popup { position: absolute; right: 4px; top: 43px; width: 150px; margin: 0; padding: 1px 0 0; list-style: none; background: #404040; border: 1px solid #222; box-shadow: 2px 2px 3px rgba(0, 0, 0, .4); font: 12px/14px Roboto, sans-serif; color: #e6e6e6; }
.popup li { height: 21px; line-height: 21px; padding-left: 20px; }
.popup .hot { background: #4f4f4f; }
.cursor { position: absolute; left: 164px; top: 77px; }

/* right panels */
.panels { width: 279px; flex: none; display: flex; flex-direction: column; border-right: 1px solid #222; margin-left: 1px; }
.panels .strip { justify-content: flex-end; padding-right: 3px; }
.absatz { border-left: 1px solid #222; border-bottom: 1px solid #222; height: 174px; }
.ebenen { flex: 1; display: flex; flex-direction: column; margin-top: 2px; border: 1px solid #222; border-width: 1px 0 0 1px; }
.ebenen h2 { padding-left: 6px; }
.abody { padding: 6px 52px 0 5px; }
.aligns { display: grid; grid-template-columns: repeat(7, 32px); padding-bottom: 5px; border-bottom: 1px solid #4e4e4e; }
.aligns button { width: 24px; height: 25px; }
.aligns .on { background: #2c2c2c; border: 1px solid #222; }
.aligns svg { width: 16px; height: 16px; }
.fields { display: grid; grid-template-columns: 116px 104px; row-gap: 7px; padding: 7px 0 6px; border-bottom: 1px solid #4e4e4e; }
.fld { display: flex; gap: 5px; align-items: center; }
.fld > svg { width: 16px; height: 14px; }
.fld input { width: 62px; }
.check { display: flex; align-items: center; gap: 4px; margin-top: 7px; font: 600 10px/14px Roboto, sans-serif; color: #ddd; }
.box { position: relative; width: 12px; height: 12px; border: 1px solid #222; background: #4a4a4a; }
.box input { position: absolute; inset: 0; width: 10px; height: 10px; opacity: 0; }
.box svg { position: absolute; left: 0; top: -2px; }
.layers { flex: 1; margin: 5px 5px 0; border: 1px solid #222; }
.layer { display: flex; align-items: center; height: 21px; border-bottom: 1px solid #383838; font: 600 10px/14px Roboto, sans-serif; color: #ddd; }
.eye { width: 21px; height: 20px; border-right: 1px solid #383838; }
.lock { width: 21px; }
.bar { width: 4px; height: 18px; background: #6f8ad8; }
.exp { width: 21px; }
.thumbn { width: 18px; height: 18px; background: #fff; border: 1px solid #111; box-shadow: inset 0 4px #fff, inset 0 5px #ddd, inset 0 -4px #fff, inset 0 -5px #ddd; }
.lname { padding-left: 5px; flex: 1; }
.target { border-left: 1px solid #383838; }
.lfoot { display: flex; align-items: center; height: 19px; padding: 0 27px 0 5px; gap: 13px; font: 600 10px/14px Roboto, sans-serif; color: #ddd; }
.lfoot span { margin-right: auto; }
.dim { color: #666; }

.watermark { position: absolute; left: 30px; bottom: 14px; display: flex; align-items: flex-end; z-index: 3; color: #a8a8a8; }
.watermark span { margin-left: -5px; font: bold 13px/16px "Liberation Sans", sans-serif; }
```
